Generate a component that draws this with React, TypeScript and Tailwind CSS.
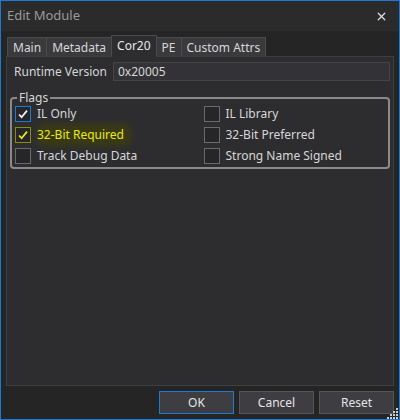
import { X } from "lucide-react";

type Flag = { label: string; checked?: boolean; focused?: boolean; hot?: boolean };

const left: Flag[] = [
  { label: "IL Only", checked: true, focused: true },
  { label: "32-Bit Required", checked: true, hot: true },
  { label: "Track Debug Data" },
];
const right: Flag[] = [{ label: "IL Library" }, { label: "32-Bit Preferred" }, { label: "Strong Name Signed" }];

function Check({ f }: { f: Flag }) {
  const box = f.focused ? "border-[#1c7ad2]" : f.hot ? "border-[#8c8c10]" : "border-[#6a6a6a]";
  return (
    <div className="relative flex h-[21px] items-center">
      {f.hot && (
        <div className="absolute left-[22px] top-[0px] h-[22px] w-[94px] rounded-[6px] bg-[#3a3a14] blur-[3px]" />
      )}
      <span className={`relative flex h-[16px] w-[16px] items-center justify-center border ${box} bg-[#262628]`}>
        {f.checked && (
          <svg width="12" height="12" viewBox="0 0 12 12">
            <path
              d="M2 6.5 L4.6 9.2 L10 2.6"
              fill="none"
              stroke={f.hot ? "#e6e61a" : "#f2f2f2"}
              strokeWidth="1.8"
            />
          </svg>
        )}
      </span>
      <span className={`relative ml-[6px] ${f.hot ? "text-[#e8e81c]" : "text-[#d6d6d6]"}`}>{f.label}</span>
    </div>
  );
}

function Btn({ label, primary }: { label: string; primary?: boolean }) {
  return (
    <button
      className={`flex h-[23px] w-[75px] items-center justify-center border bg-[#3e3e42] text-[#e4e4e4] ${
        primary ? "border-[#1c7ad2]" : "border-[#555558]"
      }`}
    >
      {label}
    </button>
  );
}

export default function App() {
  const tabs = ["Main", "Metadata", "Cor20", "PE", "Custom Attrs"];
  return (
    <div
      className="flex h-[420px] w-[400px] flex-col border border-[#1c7ad2] bg-[#252526] text-[12px] text-[#d6d6d6]"
      style={{ fontFamily: '"Noto Sans", "Noto Sans CJK KR", sans-serif' }}
    >
      <div className="flex h-[30px] shrink-0 items-center justify-between bg-[#2b2b2b] pl-[6px] pr-[11px]">
        <span className="text-[13px] text-[#9a9a9a]">Edit Module</span>
        <X className="h-[13px] w-[13px] text-[#e0e0e0]" strokeWidth={2.2} />
      </div>
      <div className="flex flex-1 flex-col px-[5px] pt-[5px]">
        <div className="flex h-[21px] items-end pl-[1px]">
          {tabs.map((t) => (
            <div
              key={t}
              className={`-mr-px flex items-center border border-[#4a4a4e] px-[5px] ${
                t === "Cor20"
                  ? "z-10 h-[22px] border-b-[#2d2d30] bg-[#2d2d30] text-[#e8e8e8]"
                  : "h-[20px] border-b-0 bg-[#3a3a3d]"
              }`}
            >
              {t}
            </div>
          ))}
        </div>
        <div className="-mt-px flex h-[330px] flex-col border border-[#3f3f42] bg-[#2d2d30] px-[3px] pt-[5px]">
          <div className="flex items-center">
            <span className="w-[103px] pl-[4px]">Runtime Version</span>
            <div className="flex h-[19px] flex-1 items-center border border-[#444448] bg-[#333337] px-[4px]">
              0x20005
            </div>
          </div>
          <div className="relative mt-[16px] h-[72px] rounded-[4px] border-2 border-[#8a8a8a] pl-[3px] pt-[4px]">
            <span className="absolute -top-[10px] left-[5px] bg-[#2d2d30] px-[2px]">Flags</span>
            <div className="grid grid-cols-2">
              <div className="flex flex-col">
                {left.map((f) => (
                  <Check key={f.label} f={f} />
                ))}
              </div>
              <div className="flex flex-col pl-[2px]">
                {right.map((f) => (
                  <Check key={f.label} f={f} />
                ))}
              </div>
            </div>
          </div>
        </div>
        <div className="flex justify-end gap-[5px] pt-[5px] pr-[0px]">
          <Btn label="OK" primary />
          <Btn label="Cancel" />
          <Btn label="Reset" />
        </div>
      </div>
      <div className="relative">
        <svg className="absolute bottom-0 right-0" width="12" height="12" viewBox="0 0 12 12">
          {[
            [9, 1],
            [6, 4],
            [9, 4],
            [3, 7],
            [6, 7],
            [9, 7],
            [0, 10],
            [3, 10],
            [6, 10],
            [9, 10],
          ].map(([x, y]) => (
            <rect key={`${x}-${y}`} x={x} y={y} width="2" height="2" fill="#cfcfcf" />
          ))}
        </svg>
      </div>
    </div>
  );
}
